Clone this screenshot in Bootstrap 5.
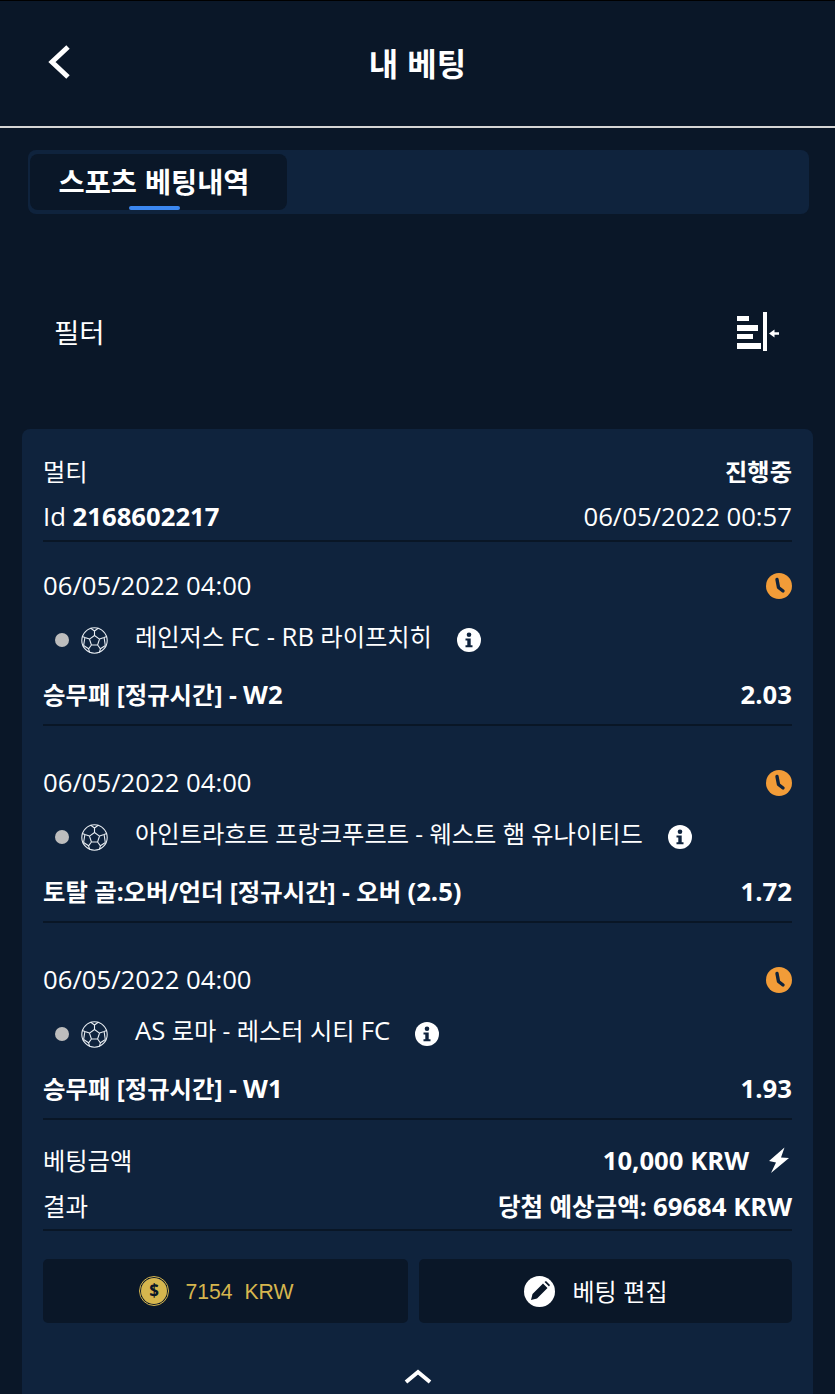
<!DOCTYPE html>
<html lang="ko">
<head>
<meta charset="utf-8">
<title>내 베팅</title>
<link href="https://cdn.jsdelivr.net/npm/bootstrap@5.3.0/dist/css/bootstrap.min.css" rel="stylesheet">
<style>
html, body { height: 100%; }
body { background: #0a1728; color: #fff; font-family: "Open Sans", "Noto Sans CJK KR", sans-serif; font-size: 24.25px; overflow: hidden; }
.lat { font-size: 25.7px; }
.shell { height: 1394px; overflow: hidden; }
.top-bar { height: 128px; border-top: 1px solid #000; border-bottom: 2px solid #d5d5d5; padding: 0 47px 4px; position: relative; }
.top-bar h1 { font-size: 32px; font-weight: 700; margin: 0; line-height: 1; font-family: "Noto Sans CJK KR", sans-serif; }
.back-link { position: absolute; left: 47px; top: 43px; line-height: 0; }
.tab-strip { height: 64px; margin: 22px 26px 0 28px; background: #0f233d; border-radius: 8px; padding: 4px 2px; }
.tab-active { width: 257px; height: 56px; background: #0a1728; border-radius: 8px; font-size: 28.4px; font-weight: 700; font-family: "Noto Sans CJK KR", sans-serif; position: relative; padding: 0 9px 2px 0; }
.tab-active::after { content: ""; position: absolute; left: 99px; bottom: 0; width: 51px; height: 4px; background: #3b87f0; border-radius: 2px; }
.filter-row { height: 215px; padding: 20px 55px 0 54px; font-size: 27.5px; font-family: "Noto Sans CJK KR", sans-serif; }
.slip { margin: 0 22px; background: #0f233d; border-radius: 8px 8px 0 0; padding: 21px 21px 0; height: 965px; }
.slip-row { height: 46px; padding-bottom: 1px; }
.slip-head { height: 46px; padding-bottom: 1px; }
.rule { border-bottom: 2px solid #091626; }
.leg { height: 197px; }
.leg-date { height: 66px; padding: 22px 0 0; }
.leg-match { height: 60px; padding: 4px 0 0 12px; }
.leg-market { height: 58px; padding-bottom: 2px; font-weight: 700; font-size: 24.4px; }
.dot { width: 14px; height: 14px; border-radius: 50%; background: #bdbdbd; flex: none; }
.match-name { margin-left: 27px; margin-right: 25px; position: relative; top: -3px; }
.ball { margin-left: 12px; flex: none; }
.stake-row { height: 46px; }
.stake-first { margin-top: 5px; }
.bolt { margin: 0 2px 0 3px; }
.stake-total { font-size: 24.5px; height: 47px; padding-top: 1px; }
.action-row { margin-top: 28px; gap: 11px; }
.action-btn { height: 64px; background: #0a1728; border-radius: 5px; font-size: 24px; }
.coin-btn { width: 365px; color: #d6b64e; font-family: "Liberation Sans", sans-serif; font-size: 21.2px; gap: 17px; padding-right: 19px; }
.coin-btn span { position: relative; top: 1px; }
.edit-btn { flex: 1; gap: 17px; font-family: "Noto Sans CJK KR", sans-serif; padding-right: 19px; }
.fold { margin-top: 45px; line-height: 0; }
</style>
</head>
<body>
<div class="shell">
  <header class="top-bar d-flex align-items-center justify-content-center">
    <a class="back-link" href="#" aria-label="뒤로">
      <svg width="24" height="36" viewBox="0 0 24 36"><path d="M21 3 5 18l16 15" fill="none" stroke="#fff" stroke-width="5"/></svg>
    </a>
    <h1>내 베팅</h1>
  </header>

  <nav class="tab-strip">
    <div class="tab-active d-flex align-items-center justify-content-center">스포츠 베팅내역</div>
  </nav>

  <div class="filter-row d-flex align-items-center justify-content-between">
    <span>필터</span>
    <svg width="44" height="40" viewBox="0 0 44 40" fill="#fff">
      <rect x="1" y="4" width="12" height="5"/><rect x="1" y="13" width="21" height="6"/><rect x="1" y="22" width="16" height="5"/><rect x="1" y="31" width="24" height="6"/>
      <rect x="27" y="0" width="4" height="39"/>
      <path d="M33 21.500 38.500 17.500v2.800H43v2.400h-4.500v2.800z"/>
    </svg>
  </div>

  <main class="slip">
    <div class="slip-head d-flex align-items-center justify-content-between">
      <span>멀티</span><b>진행중</b>
    </div>
    <div class="slip-row rule d-flex align-items-center justify-content-between">
      <span class="lat">Id <b>2168602217</b></span><span class="lat">06/05/2022 00:57</span>
    </div>

    <section class="leg">
      <div class="leg-date d-flex align-items-center justify-content-between">
        <span class="lat">06/05/2022 04:00</span>
        <svg width="26" height="26" viewBox="0 0 26 26"><circle cx="13" cy="13" r="13" fill="#f29c38"/><path d="M11 6.500 12.500 14.500 17 18" fill="none" stroke="#0f233d" stroke-width="3.400" stroke-linecap="round" stroke-linejoin="round"/></svg>
      </div>
      <div class="leg-match d-flex align-items-center">
        <span class="dot"></span>
        <svg class="ball" width="27" height="27" viewBox="0 0 27 27" fill="none" stroke="#e8edf2" stroke-width="1.1"><circle cx="13.5" cy="13.5" r="12.7"/><path d="m13.5 8.5 5 3.6-1.9 5.9h-6.2l-1.9-5.9zM13.5 8.5V4l-4-3M13.5 4l4-3M18.5 12.1l4.6-1.6 2.6-1M23.1 10.500l1.2 8M16.600 18l2.800 3.800-1 3.700M19.400 21.800l5-3.300M10.400 18l-2.800 3.800 1 3.700M7.600 21.800l-5-3.300M8.500 12.100l-4.600-1.600-2.600-1M3.900 10.500l-1.300 8"/></svg>
        <span class="match-name">레인저스 <span class="lat">FC - RB</span> 라이프치히</span>
        <svg width="24" height="24" viewBox="0 0 24 24"><circle cx="12" cy="12" r="12" fill="#fff"/><circle cx="12" cy="6.800" r="2.300" fill="#0f233d"/><path d="M8.500 10.500h5.200v6.800h1.800v2H8.500v-2h1.800v-4.800H8.500z" fill="#0f233d"/></svg>
      </div>
      <div class="leg-market rule d-flex align-items-center justify-content-between">
        <span>승무패 [정규시간] - <span class="lat">W2</span></span><span class="lat">2.03</span>
      </div>
    </section>

    <section class="leg">
      <div class="leg-date d-flex align-items-center justify-content-between">
        <span class="lat">06/05/2022 04:00</span>
        <svg width="26" height="26" viewBox="0 0 26 26"><circle cx="13" cy="13" r="13" fill="#f29c38"/><path d="M11 6.500 12.500 14.500 17 18" fill="none" stroke="#0f233d" stroke-width="3.400" stroke-linecap="round" stroke-linejoin="round"/></svg>
      </div>
      <div class="leg-match d-flex align-items-center">
        <span class="dot"></span>
        <svg class="ball" width="27" height="27" viewBox="0 0 27 27" fill="none" stroke="#e8edf2" stroke-width="1.1"><circle cx="13.5" cy="13.5" r="12.7"/><path d="m13.5 8.5 5 3.6-1.9 5.9h-6.2l-1.9-5.9zM13.5 8.5V4l-4-3M13.5 4l4-3M18.5 12.1l4.6-1.6 2.6-1M23.1 10.500l1.2 8M16.600 18l2.800 3.800-1 3.700M19.400 21.800l5-3.300M10.400 18l-2.800 3.800 1 3.700M7.600 21.800l-5-3.300M8.500 12.100l-4.600-1.600-2.600-1M3.900 10.500l-1.300 8"/></svg>
        <span class="match-name">아인트라흐트 프랑크푸르트 - 웨스트 햄 유나이티드</span>
        <svg width="24" height="24" viewBox="0 0 24 24"><circle cx="12" cy="12" r="12" fill="#fff"/><circle cx="12" cy="6.800" r="2.300" fill="#0f233d"/><path d="M8.500 10.500h5.200v6.800h1.800v2H8.500v-2h1.800v-4.800H8.500z" fill="#0f233d"/></svg>
      </div>
      <div class="leg-market rule d-flex align-items-center justify-content-between">
        <span>토탈 골:오버/언더 [정규시간] - 오버 <span class="lat">(2.5)</span></span><span class="lat">1.72</span>
      </div>
    </section>

    <section class="leg">
      <div class="leg-date d-flex align-items-center justify-content-between">
        <span class="lat">06/05/2022 04:00</span>
        <svg width="26" height="26" viewBox="0 0 26 26"><circle cx="13" cy="13" r="13" fill="#f29c38"/><path d="M11 6.500 12.500 14.500 17 18" fill="none" stroke="#0f233d" stroke-width="3.400" stroke-linecap="round" stroke-linejoin="round"/></svg>
      </div>
      <div class="leg-match d-flex align-items-center">
        <span class="dot"></span>
        <svg class="ball" width="27" height="27" viewBox="0 0 27 27" fill="none" stroke="#e8edf2" stroke-width="1.1"><circle cx="13.5" cy="13.5" r="12.7"/><path d="m13.5 8.5 5 3.6-1.9 5.9h-6.2l-1.9-5.9zM13.5 8.5V4l-4-3M13.5 4l4-3M18.5 12.1l4.6-1.6 2.6-1M23.1 10.500l1.2 8M16.600 18l2.800 3.800-1 3.700M19.400 21.800l5-3.300M10.400 18l-2.800 3.800 1 3.700M7.600 21.800l-5-3.300M8.500 12.100l-4.600-1.600-2.600-1M3.900 10.500l-1.300 8"/></svg>
        <span class="match-name"><span class="lat">AS</span> 로마 - 레스터 시티 <span class="lat">FC</span></span>
        <svg width="24" height="24" viewBox="0 0 24 24"><circle cx="12" cy="12" r="12" fill="#fff"/><circle cx="12" cy="6.800" r="2.300" fill="#0f233d"/><path d="M8.500 10.500h5.200v6.800h1.800v2H8.500v-2h1.800v-4.800H8.500z" fill="#0f233d"/></svg>
      </div>
      <div class="leg-market rule d-flex align-items-center justify-content-between">
        <span>승무패 [정규시간] - <span class="lat">W1</span></span><span class="lat">1.93</span>
      </div>
    </section>

    <div class="stake-row stake-first d-flex align-items-center justify-content-between">
      <span>베팅금액</span>
      <span class="d-flex align-items-center gap-3"><b class="lat">10,000 KRW</b>
        <svg class="bolt" width="22" height="27" viewBox="0 0 22 27" fill="#fff"><path d="M16.500.5 1 14l7 1.500L3 26 21 11l-8-.5z"/></svg></span>
    </div>
    <div class="stake-row rule stake-total d-flex align-items-center justify-content-between">
      <span>결과</span><b>당첨 예상금액: <span class="lat">69684 KRW</span></b>
    </div>

    <div class="action-row d-flex">
      <div class="action-btn coin-btn d-flex align-items-center justify-content-center">
        <svg width="30" height="30" viewBox="0 0 30 30"><circle cx="15" cy="15" r="14.500" fill="none" stroke="#d6b64e"/><circle cx="15" cy="15" r="13" fill="#d6b64e"/><text x="15" y="21" text-anchor="middle" fill="#0a1728" font-size="17" font-weight="700" font-family="Noto Sans, sans-serif">$</text></svg>
        <span>7154&nbsp; KRW</span>
      </div>
      <div class="action-btn edit-btn d-flex align-items-center justify-content-center">
        <svg width="31" height="31" viewBox="0 0 31 31"><circle cx="15.500" cy="15.500" r="15.500" fill="#fff"/><path d="m7 24 1.500-6L19 7.500l4.500 4.500L13 22.500zM20.500 6l1.500-1 4 4-1 1.500z" fill="#0a1728"/></svg>
        <span>베팅 편집</span>
      </div>
    </div>

    <div class="fold text-center">
      <svg width="28" height="16" viewBox="0 0 28 16"><path d="m2 14 12-10 12 10" fill="none" stroke="#fff" stroke-width="4"/></svg>
    </div>
  </main>
</div>
<script src="https://cdn.jsdelivr.net/npm/bootstrap@5.3.0/dist/js/bootstrap.bundle.min.js"></script>
</body>
</html>
